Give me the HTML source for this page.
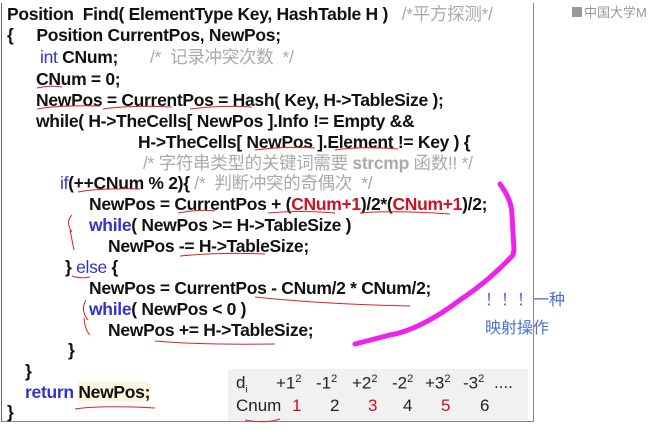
<!DOCTYPE html><html><head><meta charset="utf-8"><style>
body{margin:0;width:657px;height:438px;background:#fff;position:relative;overflow:hidden;font-family:"Liberation Sans","Noto Sans CJK SC",sans-serif}
.box{position:absolute;left:1px;top:3px;width:531px;height:418px;border:1px solid #888;border-top:none;border-left:1px solid #666}
.l{position:absolute;font-weight:bold;font-size:17.5px;letter-spacing:-0.3px;color:#111;white-space:pre;line-height:20px}
.b{color:#3333cc}.c{color:#aaa;font-weight:normal}.r{color:#cc1122}
.t{position:absolute;left:228px;top:369px;width:300px;height:52px;background:#f1f1f1}
.tt{position:absolute;font-size:17px;color:#222;white-space:pre}
.tt.r{color:#cc1122}
sup{font-size:11px}
</style></head><body>
<div class="box"></div>
<div class="t"></div>
<div class="l" style="left:7px;top:4px">Position  Find( ElementType Key, HashTable H )   <span class="c">/*平方探测*/</span></div>
<div class="l" style="left:7px;top:25px">{     Position CurrentPos, NewPos;</div>
<div class="l" style="left:40px;top:47px"><span class="b" style="font-weight:normal">int</span> CNum;       <span class="c">/*  记录冲突次数  */</span></div>
<div class="l" style="left:36px;top:69px">CNum = 0;</div>
<div class="l" style="left:36px;top:90px">NewPos = CurrentPos = Hash( Key, H-&gt;TableSize );</div>
<div class="l" style="left:36px;top:111px">while( H-&gt;TheCells[ NewPos ].Info != Empty &amp;&amp;</div>
<div class="l" style="left:138px;top:132px">H-&gt;TheCells[ NewPos ].Element != Key ) {</div>
<div class="l c" style="left:143px;top:153px">/* 字符串类型的关键词需要 <b>strcmp</b> 函数!! */</div>
<div class="l" style="left:60px;top:173px"><span class="b" style="font-weight:normal">if</span>(++CNum % 2){ <span class="c">/*  判断冲突的奇偶次  */</span></div>
<div class="l" style="left:89px;top:194px">NewPos = CurrentPos + (<span class="r">CNum+1</span>)/2*(<span class="r">CNum+1</span>)/2;</div>
<div class="l" style="left:89px;top:215px"><span class="b">while</span>( NewPos &gt;= H-&gt;TableSize )</div>
<div class="l" style="left:108px;top:236px">NewPos -= H-&gt;TableSize;</div>
<div class="l" style="left:65px;top:257px">} <span class="b" style="font-weight:normal">else</span> {</div>
<div class="l" style="left:89px;top:278px">NewPos = CurrentPos - CNum/2 * CNum/2;</div>
<div class="l" style="left:89px;top:299px"><span class="b">while</span>( NewPos &lt; 0 )</div>
<div class="l" style="left:108px;top:320px">NewPos += H-&gt;TableSize;</div>
<div class="l" style="left:68px;top:340px">}</div>
<div class="l" style="left:25px;top:361px">}</div>
<div class="l" style="left:25px;top:382px"><span class="b">return</span> <span style="background:#fbf6e0">NewPos;</span></div>
<div class="l" style="left:7px;top:402px">}</div>
<div class="tt" style="left:236px;top:373px">d<sub style="font-size:10px">i</sub></div>
<div class="tt" style="left:276px;top:373px">+1<sup>2</sup></div>
<div class="tt" style="left:316px;top:373px">-1<sup>2</sup></div>
<div class="tt" style="left:352px;top:373px">+2<sup>2</sup></div>
<div class="tt" style="left:392px;top:373px">-2<sup>2</sup></div>
<div class="tt" style="left:425px;top:373px">+3<sup>2</sup></div>
<div class="tt" style="left:463px;top:373px">-3<sup>2</sup></div>
<div class="tt" style="left:494px;top:373px">....</div>
<div class="tt" style="left:236px;top:396px">Cnum</div>
<div class="tt r" style="left:292px;top:396px">1</div>
<div class="tt" style="left:330px;top:396px">2</div>
<div class="tt r" style="left:368px;top:396px">3</div>
<div class="tt" style="left:403px;top:396px">4</div>
<div class="tt r" style="left:441px;top:396px">5</div>
<div class="tt" style="left:480px;top:396px">6</div>
<div style="position:absolute;left:485px;top:287px;font-size:16px;color:#4a6fd0;line-height:28px">！！！一种<br>映射操作</div>
<div style="position:absolute;left:572px;top:2px;font-size:13px;color:#999"><span style="display:inline-block;width:10px;height:10px;background:#999;margin-right:2px"></span>中国大学M</div>
<svg width="657" height="438" style="position:absolute;left:0;top:0">
<path d="M500 184 Q512 200 512 215 L514 250 L513 255 Q490 280 460 300 Q420 330 390 335 L355 344" stroke="#ee22ee" stroke-width="5" fill="none" stroke-linecap="round"/>
<g stroke="#dd2222" stroke-width="1" fill="none">
<path d="M37 88 Q50 85 62 87"/><path d="M37 109 Q60 105 100 106"/><path d="M103 109 Q130 105 172 107"/><path d="M190 109 Q220 105 252 107"/>
<path d="M255 150 Q285 146 315 148"/><path d="M335 150 Q360 146 398 149"/><path d="M78 192 Q100 188 140 189"/>
<path d="M178 213 Q200 209 215 211"/><path d="M268 213 Q300 210 335 213"/><path d="M360 213 Q395 210 450 214"/>
<path d="M180 256 Q220 252 265 254"/><path d="M72 276 Q80 279 90 277"/><path d="M255 297 Q320 304 410 306"/>
<path d="M155 341 Q200 345 275 344"/><path d="M75 409 Q100 405 155 408"/><path d="M245 420 Q265 424 280 419"/>
<path d="M72 232 Q65 222 72 215 M70 230 Q72 240 74 250"/><path d="M88 320 Q80 310 86 300 M84 318 Q85 330 90 335"/>
</g></svg>
</body></html>
